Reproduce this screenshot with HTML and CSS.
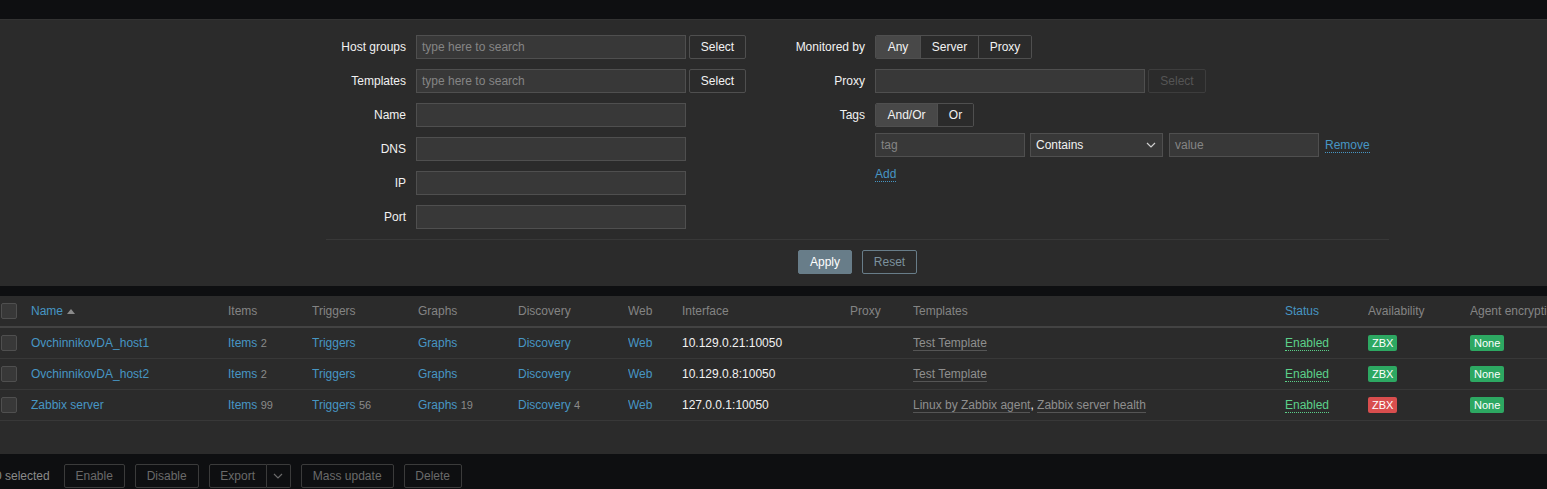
FILE: index.html
```html
<!DOCTYPE html>
<html lang="en">
<head>
<meta charset="utf-8">
<title>Hosts</title>
<link rel="stylesheet" href="styles.css">
</head>
<body>
<div class="topbar"></div>

<div class="filter">
  <div class="filter-form">
    <div class="filter-cols">
      <div class="fgrid fgrid-left">
        <label class="flabel">Host groups</label>
        <div class="fctrl"><div class="input placeholder">type here to search</div><button class="btn-alt">Select</button></div>
        <label class="flabel">Templates</label>
        <div class="fctrl"><div class="input placeholder">type here to search</div><button class="btn-alt">Select</button></div>
        <label class="flabel">Name</label>
        <div class="fctrl"><div class="input"></div></div>
        <label class="flabel">DNS</label>
        <div class="fctrl"><div class="input"></div></div>
        <label class="flabel">IP</label>
        <div class="fctrl"><div class="input"></div></div>
        <label class="flabel">Port</label>
        <div class="fctrl"><div class="input"></div></div>
      </div>

      <div class="fgrid fgrid-right">
        <label class="flabel">Monitored by</label>
        <div class="fctrl">
          <div class="seg">
            <span class="seg-item w-any on">Any</span>
            <span class="seg-item w-server">Server</span>
            <span class="seg-item w-proxy">Proxy</span>
          </div>
        </div>
        <label class="flabel">Proxy</label>
        <div class="fctrl"><div class="input"></div><button class="btn-alt disabled">Select</button></div>
        <label class="flabel">Tags</label>
        <div class="tags">
          <div class="seg seg-tags">
            <span class="seg-item w-andor on">And/Or</span>
            <span class="seg-item w-or">Or</span>
          </div>
          <div class="tag-row">
            <div class="input input-tag placeholder">tag</div>
            <div class="select">
              <span>Contains</span>
              <svg class="chev" width="10" height="6" viewBox="0 0 10 6"><polyline points="1,1 5,5 9,1" fill="none" stroke="#cfcfcf" stroke-width="1.2"/></svg>
            </div>
            <div class="input input-tag placeholder">value</div>
            <a class="link-action">Remove</a>
          </div>
          <div class="add-row"><a class="link-action">Add</a></div>
        </div>
      </div>
    </div>
    <div class="filter-sep"></div>
    <div class="filter-actions">
      <button class="btn-apply">Apply</button>
      <button class="btn-reset">Reset</button>
    </div>
  </div>
</div>

<div class="list">
  <table class="hosts">
    <colgroup>
      <col class="c-check"><col class="c-name"><col class="c-items"><col class="c-triggers"><col class="c-graphs"><col class="c-disc"><col class="c-web"><col class="c-iface"><col class="c-proxy"><col class="c-tpl"><col class="c-status"><col class="c-avail"><col class="c-enc">
    </colgroup>
    <thead>
      <tr>
        <th><span class="cb"></span></th>
        <th><a class="link">Name</a><span class="sort-up"></span></th>
        <th>Items</th>
        <th>Triggers</th>
        <th>Graphs</th>
        <th>Discovery</th>
        <th>Web</th>
        <th>Interface</th>
        <th>Proxy</th>
        <th>Templates</th>
        <th><a class="link">Status</a></th>
        <th>Availability</th>
        <th>Agent encryption</th>
      </tr>
    </thead>
    <tbody>
      <tr>
        <td><span class="cb"></span></td>
        <td><a class="link">OvchinnikovDA_host1</a></td>
        <td><a class="link">Items</a> <span class="count">2</span></td>
        <td><a class="link">Triggers</a></td>
        <td><a class="link">Graphs</a></td>
        <td><a class="link">Discovery</a></td>
        <td><a class="link">Web</a></td>
        <td class="iface">10.129.0.21:10050</td>
        <td></td>
        <td><a class="tpl">Test Template</a></td>
        <td><a class="enabled">Enabled</a></td>
        <td><span class="badge green">ZBX</span></td>
        <td><span class="badge green">None</span></td>
      </tr>
      <tr>
        <td><span class="cb"></span></td>
        <td><a class="link">OvchinnikovDA_host2</a></td>
        <td><a class="link">Items</a> <span class="count">2</span></td>
        <td><a class="link">Triggers</a></td>
        <td><a class="link">Graphs</a></td>
        <td><a class="link">Discovery</a></td>
        <td><a class="link">Web</a></td>
        <td class="iface">10.129.0.8:10050</td>
        <td></td>
        <td><a class="tpl">Test Template</a></td>
        <td><a class="enabled">Enabled</a></td>
        <td><span class="badge green">ZBX</span></td>
        <td><span class="badge green">None</span></td>
      </tr>
      <tr>
        <td><span class="cb"></span></td>
        <td><a class="link">Zabbix server</a></td>
        <td><a class="link">Items</a> <span class="count">99</span></td>
        <td><a class="link">Triggers</a> <span class="count">56</span></td>
        <td><a class="link">Graphs</a> <span class="count">19</span></td>
        <td><a class="link">Discovery</a> <span class="count">4</span></td>
        <td><a class="link">Web</a></td>
        <td class="iface">127.0.0.1:10050</td>
        <td></td>
        <td><a class="tpl">Linux by Zabbix agent</a><span class="comma">,</span> <a class="tpl">Zabbix server health</a></td>
        <td><a class="enabled">Enabled</a></td>
        <td><span class="badge red">ZBX</span></td>
        <td><span class="badge green">None</span></td>
      </tr>
    </tbody>
  </table>
  <div class="paging"></div>
</div>

<div class="action-bar">
  <span class="selected-count">0 selected</span>
  <button class="btn-dis w-enable">Enable</button>
  <button class="btn-dis w-disable">Disable</button>
  <div class="btn-split">
    <button class="btn-dis split-main">Export</button>
    <button class="btn-dis split-toggle"><svg width="10" height="6" viewBox="0 0 10 6"><polyline points="1,1 5,5 9,1" fill="none" stroke="#6a6a6a" stroke-width="1.2"/></svg></button>
  </div>
  <button class="btn-dis w-mass">Mass update</button>
  <button class="btn-dis w-delete">Delete</button>
</div>
</body>
</html>
```

FILE: styles.css
```css
* { box-sizing: border-box; }

html, body { margin: 0; padding: 0; }

body {
  background: #0e0f11;
  color: #f2f2f2;
  font-family: "Liberation Sans", Arial, sans-serif;
  font-size: 12px;
  width: 1547px;
  height: 489px;
  overflow: hidden;
}

button {
  font-family: inherit;
  font-size: 12px;
  margin: 0;
  cursor: default;
}

.topbar { height: 19px; }

/* ---------- filter ---------- */
.filter {
  background: #2b2b2b;
  border-top: 1px solid #333333;
  padding: 15px 0 12px;
}

.filter-form {
  margin-left: 326px;
  width: 1063px;
}

.filter-cols {
  display: flex;
  align-items: flex-start;
}

.fgrid {
  display: grid;
  column-gap: 10px;
  row-gap: 10px;
  align-items: start;
}

.fgrid-left { grid-template-columns: 80px auto; }
.fgrid-right { grid-template-columns: 99px auto; margin-left: 20px; }

.flabel {
  text-align: right;
  line-height: 24px;
  white-space: nowrap;
  color: #f2f2f2;
}

.fctrl {
  display: flex;
  gap: 3px;
}

.input {
  width: 270px;
  height: 24px;
  background: #383838;
  border: 1px solid #4f4f4f;
  padding: 0 5px;
  line-height: 22px;
  color: #f2f2f2;
}

.placeholder { color: #858585; }

.input-tag { width: 150px; }

.btn-alt {
  height: 24px;
  width: 57px;
  background: #2b2b2b;
  border: 1px solid #4f4f4f;
  border-radius: 2px;
  color: #f2f2f2;
  padding: 0;
}

.btn-alt.disabled {
  width: 58px;
  color: #555555;
  border-color: #3d3d3d;
}

.seg {
  display: flex;
  height: 24px;
  border: 1px solid #4f4f4f;
  border-radius: 2px;
  overflow: hidden;
  width: max-content;
}

.seg-item {
  line-height: 22px;
  text-align: center;
  color: #f2f2f2;
  background: #2b2b2b;
}

.seg-item + .seg-item { border-left: 1px solid #4f4f4f; }
.seg-item.on { background: #484848; }

.w-any { width: 44px; }
.w-server { width: 58px; }
.w-proxy { width: 53px; }
.w-andor { width: 61px; }
.w-or { width: 36px; }

.tags { display: flex; flex-direction: column; }

.tag-row {
  display: flex;
  align-items: center;
  margin-top: 6px;
}

.select {
  width: 133px;
  height: 24px;
  margin-left: 5px;
  margin-right: 6px;
  background: #383838;
  border: 1px solid #4f4f4f;
  padding: 0 5px;
  display: flex;
  align-items: center;
  justify-content: space-between;
  color: #f2f2f2;
}

.chev { margin-right: 1px; }

.link-action {
  color: #4796c4;
  border-bottom: 1px dotted #4796c4;
  margin-left: 6px;
  line-height: 14px;
}

.add-row {
  margin-top: 10px;
  line-height: 14px;
}

.add-row .link-action { margin-left: 0; }

.filter-sep {
  margin-top: 10px;
  border-top: 1px solid #383838;
}

.filter-actions {
  display: flex;
  justify-content: center;
  gap: 10px;
  padding-top: 10px;
}

.btn-apply {
  height: 24px;
  width: 54px;
  background: #687d89;
  border: 1px solid #687d89;
  border-radius: 2px;
  color: #ffffff;
  padding: 0;
}

.btn-reset {
  height: 24px;
  width: 55px;
  background: transparent;
  border: 1px solid #687d89;
  border-radius: 2px;
  color: #7b919d;
  padding: 0;
}

/* ---------- list ---------- */
.list {
  margin-top: 10px;
  background: #2b2b2b;
  width: 1620px;
}

.hosts {
  width: 1620px;
  table-layout: fixed;
  border-collapse: collapse;
}

.c-check { width: 31px; }
.c-name { width: 197px; }
.c-items { width: 84px; }
.c-triggers { width: 106px; }
.c-graphs { width: 100px; }
.c-disc { width: 110px; }
.c-web { width: 54px; }
.c-iface { width: 168px; }
.c-proxy { width: 63px; }
.c-tpl { width: 372px; }
.c-status { width: 83px; }
.c-avail { width: 102px; }
.c-enc { width: 150px; }

.hosts th,
.hosts td {
  padding: 0;
  text-align: left;
  white-space: nowrap;
  overflow: hidden;
  vertical-align: middle;
}

.hosts th {
  height: 31px;
  font-weight: normal;
  color: #848484;
  border-bottom: 2px solid #434343;
}

.hosts td {
  height: 31px;
  border-bottom: 1px solid #383838;
}

.cb {
  display: block;
  width: 16px;
  height: 16px;
  margin-left: 1px;
  background: #383838;
  border: 1px solid #4f4f4f;
  border-radius: 2px;
}

.link { color: #4796c4; }

.sort-up {
  display: inline-block;
  margin-left: 4px;
  width: 0;
  height: 0;
  border-left: 4px solid transparent;
  border-right: 4px solid transparent;
  border-bottom: 5px solid #8a8a8a;
  vertical-align: 1px;
}

.count {
  color: #8a8a8a;
  font-size: 11px;
}

.iface { color: #f2f2f2; }

.tpl {
  color: #8f8f8f;
  border-bottom: 1px solid #555555;
}

.comma { color: #f2f2f2; }

.enabled {
  color: #5cd18a;
  border-bottom: 1px dotted #5cd18a;
}

.badge {
  display: inline-block;
  height: 16px;
  line-height: 16px;
  padding: 0 4px;
  border-radius: 2px;
  font-size: 11px;
  color: #ffffff;
}

.badge.green { background: #2da862; }
.badge.red { background: #d94e4e; }

.paging { height: 33px; }

/* ---------- action bar ---------- */
.action-bar {
  display: flex;
  align-items: center;
  gap: 10px;
  padding-top: 10px;
  margin-left: -5px;
}

.selected-count {
  color: #8a8a8a;
  margin-right: 4px;
}

.btn-dis {
  height: 24px;
  background: transparent;
  border: 1px solid #3b3b3b;
  border-radius: 2px;
  color: #6a6a6a;
  padding: 0;
}

.w-enable { width: 61px; }
.w-disable { width: 64px; }
.w-mass { width: 93px; }
.w-delete { width: 58px; }

.btn-split { display: flex; }

.split-main {
  width: 58px;
  border-radius: 2px 0 0 2px;
}

.split-toggle {
  width: 24px;
  border-left: none;
  border-radius: 0 2px 2px 0;
  display: flex;
  align-items: center;
  justify-content: center;
}
```
